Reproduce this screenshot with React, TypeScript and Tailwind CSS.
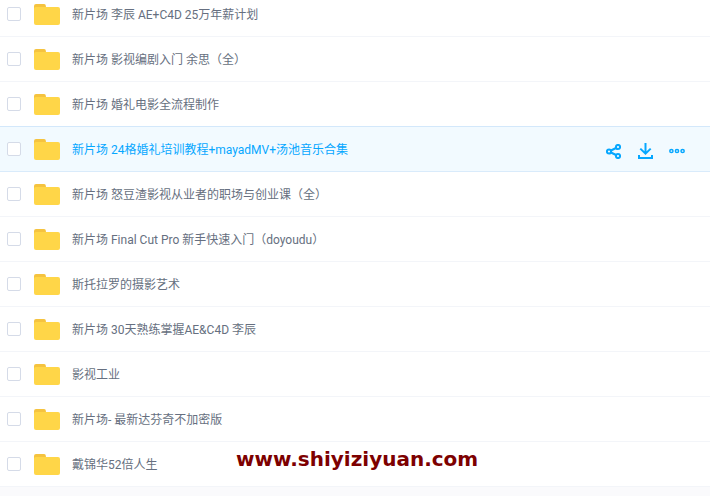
const rows = [
  "新片场 李辰 AE+C4D 25万年薪计划",
  "新片场 影视编剧入门 余思（全）",
  "新片场 婚礼电影全流程制作",
  "新片场 24格婚礼培训教程+mayadMV+汤池音乐合集",
  "新片场 怒豆渣影视从业者的职场与创业课（全）",
  "新片场 Final Cut Pro 新手快速入门（doyoudu）",
  "斯托拉罗的摄影艺术",
  "新片场 30天熟练掌握AE&C4D 李辰",
  "影视工业",
  "新片场- 最新达芬奇不加密版",
  "戴锦华52倍人生",
];

function FolderIcon() {
  return (
    <svg width="26" height="21" viewBox="0 0 26 21" className="shrink-0">
      <path d="M0 2a2 2 0 0 1 2-2h8a2 2 0 0 1 1.6.8L12 3v4H0z" fill="#f5c33f" />
      <rect x="0" y="3" width="26" height="18" rx="2" fill="#ffd648" />
    </svg>
  );
}

function ShareIcon() {
  return (
    <svg width="15" height="15" viewBox="0 0 15 15" fill="none" stroke="#06a7ff" strokeWidth="2">
      <circle cx="3" cy="7.5" r="2.1" />
      <circle cx="12" cy="3" r="2.1" />
      <circle cx="12" cy="12" r="2.1" />
      <path d="M5 6.5 10 4M5 8.5l5 2.5" />
    </svg>
  );
}

function DownloadIcon() {
  return (
    <svg width="15" height="16" viewBox="0 0 15 16" fill="none" stroke="#06a7ff" strokeWidth="2">
      <path d="M7.5 0v10M2.3 5.6l5.2 5 5.2-5" />
      <path d="M1 12v3h13v-3" />
    </svg>
  );
}

function MoreIcon() {
  return (
    <svg width="16" height="6" viewBox="0 0 16 6" fill="none" stroke="#06a7ff" strokeWidth="1.5">
      <circle cx="2.4" cy="3" r="1.6" />
      <circle cx="8" cy="3" r="1.6" />
      <circle cx="13.6" cy="3" r="1.6" />
    </svg>
  );
}

export default function App() {
  return (
    <div
      className="relative h-[496px] w-[710px] overflow-hidden bg-[#fafafc] text-xs"
      style={{ fontFamily: 'Roboto, "Noto Sans CJK SC", sans-serif' }}
    >
      <ul className="-mt-[8px] bg-white">
        {rows.map((name, i) => {
          const active = i === 3;
          return (
            <li
              key={name}
              className={
                active
                  ? "flex h-[45px] items-center border-b border-[#d9ebfb] bg-[#f2faff] shadow-[0_-1px_0_#d3e8fb]"
                  : "flex h-[45px] items-center border-b border-[#f3f5f9]"
              }
            >
              <span className="ml-[7px] h-[14px] w-[14px] rounded-[2px] border border-[#d5dbe8] bg-white" />
              <span className="ml-[13px] mt-[1px] flex">
                <FolderIcon />
              </span>
              <span className={active ? "ml-[12px] mt-[2px] text-[#06a7ff]" : "ml-[12px] mt-[2px] text-[#666f80]"}>
                {name}
              </span>
              {active && (
                <div className="ml-auto mr-[25px] mt-[4px] flex items-center gap-[16px]">
                  <span className="mr-[1px] flex">
                    <ShareIcon />
                  </span>
                  <DownloadIcon />
                  <MoreIcon />
                </div>
              )}
            </li>
          );
        })}
      </ul>
      <div
        className="absolute left-[236px] top-[449px] text-[20px] font-bold leading-none text-[#7d0000]"
        style={{ fontFamily: '"DejaVu Sans", sans-serif' }}
      >
        www.shiyiziyuan.com
      </div>
    </div>
  );
}
